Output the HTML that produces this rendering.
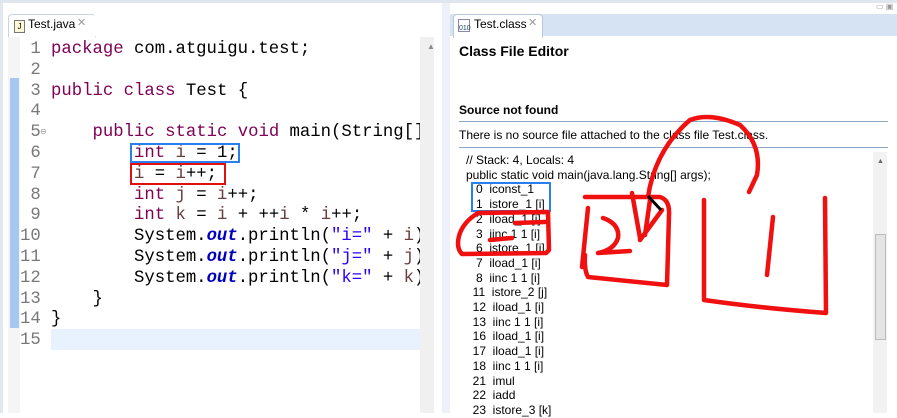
<!DOCTYPE html>
<html><head><meta charset="utf-8"><style>
body{margin:0;width:897px;height:413px;overflow:hidden;background:#fff;position:relative;font-family:"Liberation Sans",sans-serif}
.a{position:absolute}
.code{font-family:"Liberation Mono",monospace;font-size:17.3px;line-height:20.8px;white-space:pre;color:#000}
.k{color:#7f0055}
.s{color:#2a00ff}
.o{color:#0000c0;font-style:italic;font-weight:bold}
.v{color:#6a3e3e}
.bc{font-size:12px;line-height:14.7px;white-space:pre;color:#000}
</style></head><body>
<div class="a" style="left:0;top:0;width:897px;height:3px;background:#dfe6ef"></div>
<div class="a" style="left:0;top:3px;width:3px;height:410px;background:#e3e8ee"></div>
<div class="a" style="left:442px;top:3px;width:8px;height:410px;background:#eef1f5"></div>
<div class="a" style="left:8px;top:14px;width:86px;height:22px;background:#fff;border:1px solid #c9d4e0;border-bottom:none;border-radius:4px 4px 0 0"></div>
<div class="a" style="left:94px;top:14px;width:348px;height:22px;background:#fff"></div>
<div class="a" style="left:14px;top:20px;width:9px;height:11px;border:1px solid #777;background:#fff8d8;font-size:8px;line-height:11px;text-align:center">J</div>
<div class="a" style="left:28px;top:17px;font-size:12px;color:#000">Test.java</div>
<div class="a" style="left:77px;top:16px;font-size:11px;color:#999">✕</div>
<div class="a" style="left:8px;top:37px;width:12px;height:376px;background:#f5f5f5"></div>
<div class="a" style="left:10px;top:78px;width:9px;height:250px;background:#a6c8f0"></div>
<div class="a" style="left:420px;top:37px;width:14px;height:376px;background:#f0f0f0"></div>
<div class="a" style="left:427px;top:42px;font-size:8px;color:#888">▲</div>
<div class="a" style="left:51px;top:329px;width:369px;height:21px;background:#e8f2fe"></div>
<div class="a code" style="left:20px;top:40px;color:#787878;text-align:right;width:20px"> 1
 2
 3
 4
 5
 6
 7
 8
 9
10
11
12
13
14
15</div>
<div class="a" style="left:40px;top:127px;font-size:8px;color:#999">⊖</div>
<div class="a code" style="left:51px;top:40px;width:369px;overflow:hidden"><span class="k">package</span> com.atguigu.test;

<span class="k">public</span> <span class="k">class</span> Test {

    <span class="k">public</span> <span class="k">static</span> <span class="k">void</span> main(String[] args) {
        <span class="k">int</span> <span class="v">i</span> = 1;
        <span class="v">i</span> = <span class="v">i</span>++;
        <span class="k">int</span> <span class="v">j</span> = <span class="v">i</span>++;
        <span class="k">int</span> <span class="v">k</span> = <span class="v">i</span> + ++<span class="v">i</span> * <span class="v">i</span>++;
        System.<span class="o">out</span>.println(<span class="s">"i="</span> + <span class="v">i</span>);
        System.<span class="o">out</span>.println(<span class="s">"j="</span> + <span class="v">j</span>);
        System.<span class="o">out</span>.println(<span class="s">"k="</span> + <span class="v">k</span>);
    }
}
</div>
<div class="a" style="left:130px;top:143px;width:110px;height:20px;border:2px solid #2a7ff0;box-sizing:border-box"></div>
<div class="a" style="left:130px;top:163px;width:96px;height:22px;border:2px solid #e01010;box-sizing:border-box"></div>
<div class="a" style="left:450px;top:14px;width:447px;height:22px;background:#d6e3f2"></div>
<div class="a" style="left:453px;top:14px;width:88px;height:23px;background:#fff;border:1px solid #b9c9dc;border-bottom:none;border-radius:4px 4px 0 0"></div>
<div class="a" style="left:458px;top:19px;width:12px;height:13px;font-size:7px;color:#246;border:1px solid #88a;box-sizing:border-box;line-height:18px">010</div>
<div class="a" style="left:474px;top:17px;font-size:12px">Test.class</div>
<div class="a" style="left:528px;top:16px;font-size:11px;color:#999">✕</div>
<div class="a" style="left:876px;top:2px;font-size:8px;color:#999">▭ ▣</div>
<div class="a" style="left:459px;top:43px;font-size:14px;font-weight:bold">Class File Editor</div>
<div class="a" style="left:459px;top:103px;font-size:12px;font-weight:bold">Source not found</div>
<div class="a" style="left:459px;top:121px;width:429px;height:1px;background:#8fa6c4"></div>
<div class="a" style="left:459px;top:128px;font-size:12px">There is no source file attached to the class file Test.class.</div>
<div class="a" style="left:459px;top:147px;width:429px;height:1px;background:#8fa6c4"></div>
<div class="a" style="left:873px;top:152px;width:14px;height:261px;background:#f2f2f2"></div>
<div class="a" style="left:875px;top:234px;width:11px;height:106px;background:#e4e4e4;border:1px solid #bbb;box-sizing:border-box"></div>
<div class="a" style="left:877px;top:158px;font-size:7px;color:#666">▲</div>
<div class="a bc" style="left:466px;top:153px">// Stack: 4, Locals: 4
public static void main(java.lang.String[] args);
   0  iconst_1
   1  istore_1 [i]
   2  iload_1 [i]
   3  iinc 1 1 [i]
   6  istore_1 [i]
   7  iload_1 [i]
   8  iinc 1 1 [i]
  11  istore_2 [j]
  12  iload_1 [i]
  13  iinc 1 1 [i]
  16  iload_1 [i]
  17  iload_1 [i]
  18  iinc 1 1 [i]
  21  imul
  22  iadd
  23  istore_3 [k]</div>
<div class="a" style="left:471px;top:182px;width:80px;height:30px;border:2px solid #2a7ff0;box-sizing:border-box"></div>
<svg class="a" style="left:0;top:0" width="897" height="413" fill="none" stroke="#f01010" stroke-width="4.5" stroke-linecap="round" stroke-linejoin="round">
<path d="M478 213 L548 212 L549 250 L546 253 L462 254 Q456 248 459 236 Q463 222 478 213"/>
<path d="M515 223 L545 222 M490 240 L512 238"/>
<path d="M585 197 L660 197 Q670 200 669 215 L667 285 L588 277 Q584 270 585 255 M588 208 L582 267"/>
<path d="M603 218 Q620 224 618 238 Q614 250 598 253 L630 251"/>
<path d="M632 193 L640 238 M650 200 L645 235 M662 210 L640 240"/>
<path d="M648 197 Q655 150 690 120 Q710 112 740 125 Q762 145 757 175 L749 192"/>
<path d="M704 200 L704 300 Q760 308 826 313 L825 198"/>
<path d="M773 217 L767 275"/>
</svg>
<svg class="a" style="left:0;top:0" width="897" height="413"><path d="M648 196 L661 210" stroke="#000" stroke-width="3"/></svg>
</body></html>
